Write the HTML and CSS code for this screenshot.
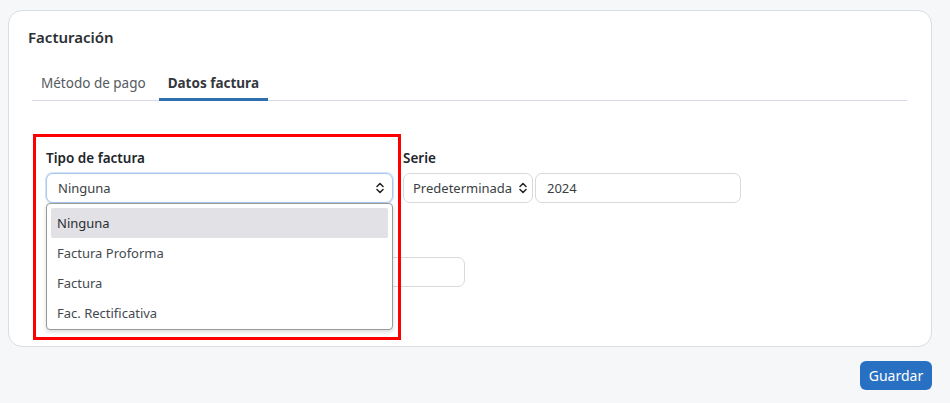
FILE: index.html
```html
<!DOCTYPE html>
<html lang="es">
<head>
<meta charset="utf-8">
<link rel="stylesheet" href="styles.css">
</head>
<body>
<div class="page">
  <section class="card">
    <h2 class="card-title">Facturación</h2>
    <nav class="tabs">
      <a class="tab">Método de pago</a>
      <a class="tab active">Datos factura</a>
    </nav>
    <div class="form">
      <div class="row">
        <div class="field tipo">
          <label class="label">Tipo de factura</label>
          <div class="select focused">
            <span>Ninguna</span>
            <svg class="chev" width="8" height="12" viewBox="0 0 8 12"><path d="M1 4.5 L4 1.5 L7 4.5 M1 7.5 L4 10.5 L7 7.5" fill="none" stroke="#222" stroke-width="1.5" stroke-linecap="round" stroke-linejoin="round"/></svg>
          </div>
          <ul class="dropdown">
            <li class="opt sel">Ninguna</li>
            <li class="opt">Factura Proforma</li>
            <li class="opt">Factura</li>
            <li class="opt">Fac. Rectificativa</li>
          </ul>
          <div class="annot"></div>
        </div>
        <div class="field serie">
          <label class="label">Serie</label>
          <div class="group">
            <div class="select small">
              <span>Predeterminada</span>
              <svg class="chev" width="8" height="12" viewBox="0 0 8 12"><path d="M1 4.5 L4 1.5 L7 4.5 M1 7.5 L4 10.5 L7 7.5" fill="none" stroke="#222" stroke-width="1.5" stroke-linecap="round" stroke-linejoin="round"/></svg>
            </div>
            <div class="input year">2024</div>
          </div>
        </div>
      </div>
      <div class="row second">
        <div class="field">
          <label class="label">Fecha</label>
          <div class="input wide"></div>
        </div>
      </div>
    </div>
  </section>
  <div class="actions">
    <button class="btn">Guardar</button>
  </div>
</div>
</body>
</html>
```
FILE: styles.css
```css
* { box-sizing: border-box; }
html, body { margin: 0; padding: 0; }
body {
  background: #f6f7f9;
  font-family: "Noto Sans", "Open Sans", sans-serif;
  color: #212529;
  font-size: 14px;
}
.page { padding: 10px 18px 0 8px; }
.card {
  width: 924px;
  height: 337px;
  background: #fff;
  border: 1px solid #d8dde6;
  border-radius: 14px;
  padding: 16px 20px 0 19px;
}
.card-title {
  margin: 0;
  font-size: 15px;
  font-weight: 600;
  line-height: 20px;
  color: #2b2f33;
}
.tabs {
  display: flex;
  margin: 18px 4px 0 4px;
  padding-left: 0;
  border-bottom: 1px solid #d6dbe5;
  height: 36px;
}
.tab {
  padding: 8px 9px 0 9px;
  line-height: 20px;
  font-size: 13.5px;
  color: #555a60;
  position: relative;
  margin-right: 4px;
}
.tab.active {
  font-weight: 700;
  color: #34383d;
}
.tab.active::after {
  content: "";
  position: absolute;
  left: 0; right: 0;
  bottom: -1px;
  height: 3px;
  background: #2f6fb0;
}
.form { padding: 47px 0 0 18px; }
.row { display: flex; align-items: flex-start; gap: 10px; }
.field { position: relative; }
.label {
  display: block;
  font-size: 13.5px;
  font-weight: 600;
  line-height: 20px;
  margin-bottom: 5px;
  color: #212529;
}
.tipo { width: 347px; }
.select, .input {
  height: 30px;
  border: 1px solid #d6d9de;
  border-radius: 7px;
  display: flex;
  align-items: center;
  padding: 0 8px 0 11px;
  font-size: 13px;
  color: #3a3f44;
  background: #fff;
}
.select { justify-content: space-between; }
.select.focused {
  border-color: #a9c8ee;
  box-shadow: 0 0 0 1px #d3e4f8;
}
.chev { flex: none; }
.group { display: flex; gap: 2px; }
.select.small { width: 130px; padding-left: 9px; padding-right: 5px; }
.input.year { width: 206px; }
.input.wide { width: 419px; }
.second { margin-top: 29px; }
.second .label { visibility: hidden; }
.dropdown {
  position: absolute;
  left: 0;
  top: 55px;
  width: 347px;
  margin: 0;
  padding: 4px 4px 1px 4px;
  list-style: none;
  background: #fff;
  border: 1px solid #9a9a9a;
  border-radius: 4px;
  box-shadow: 0 2px 4px rgba(0,0,0,0.15);
  z-index: 5;
}
.opt {
  height: 30px;
  line-height: 30px;
  padding-left: 6px;
  font-size: 13px;
  color: #444a50;
}
.opt.sel {
  background: #e1e1e6;
  border-radius: 2px;
  color: #2b2f33;
}
.annot {
  position: absolute;
  left: -13px;
  top: -14px;
  width: 368px;
  height: 206px;
  border: 3px solid #ff0000;
  z-index: 6;
  pointer-events: none;
}
.actions {
  display: flex;
  justify-content: flex-end;
  width: 924px;
  margin-top: 14px;
}
.btn {
  height: 29px;
  width: 72px;
  border: none;
  border-radius: 6px;
  background: #2870c2;
  color: #fff;
  font-family: inherit;
  font-size: 14px;
  padding: 0;
}
```
